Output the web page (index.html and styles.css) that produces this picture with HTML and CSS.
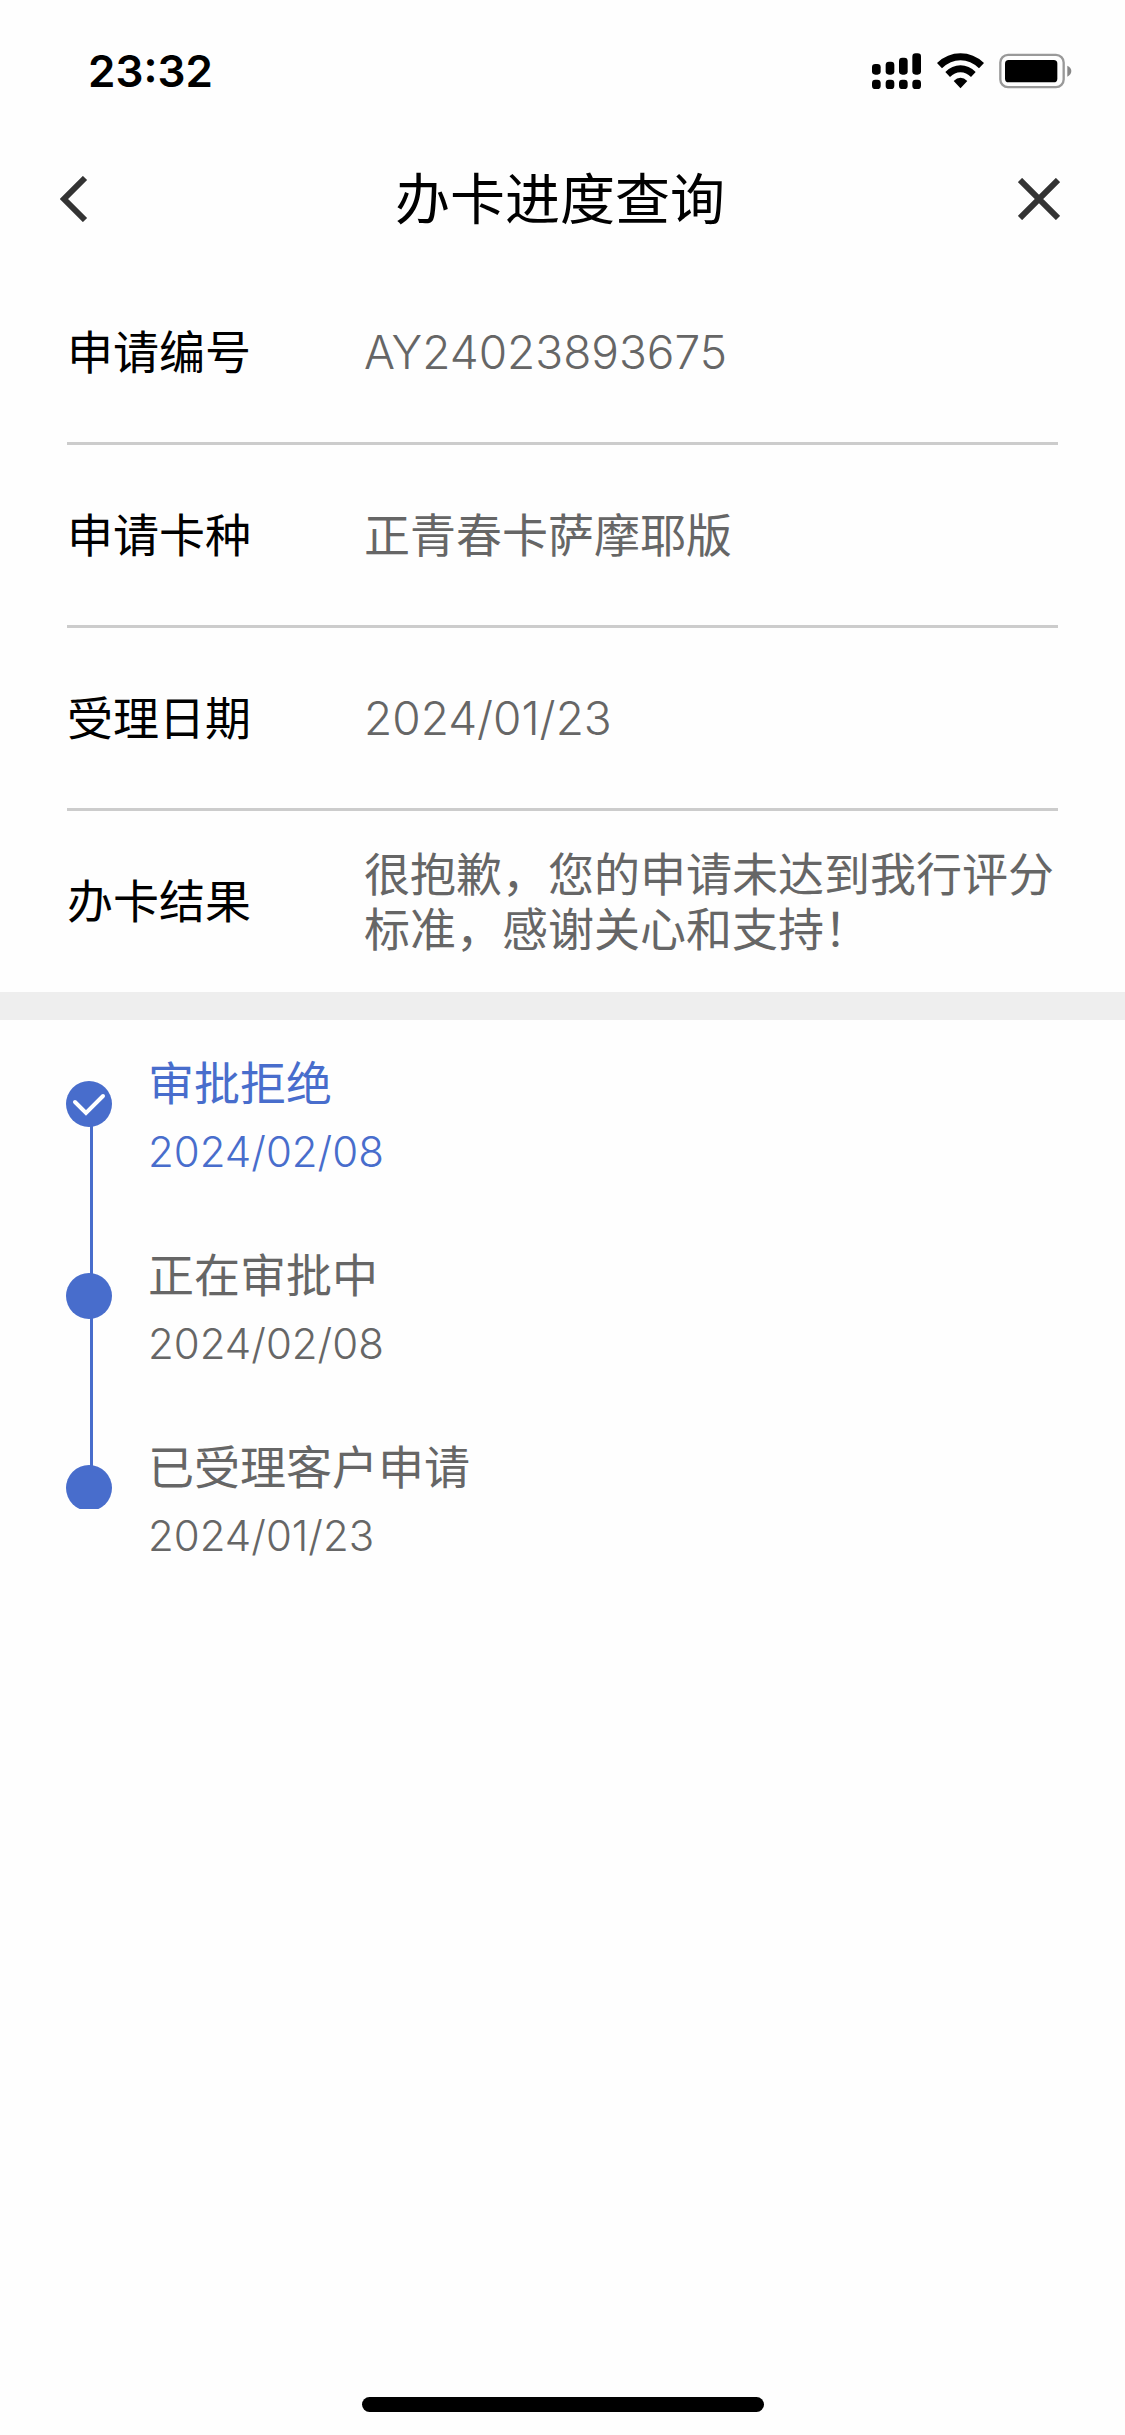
FILE: index.html
```html
<!DOCTYPE html>
<html lang="zh-CN">
<head>
<meta charset="utf-8">
<meta name="viewport" content="width=device-width, initial-scale=1">
<title>办卡进度查询</title>
<link rel="stylesheet" href="styles.css">
</head>
<body>
<div class="status-bar">
  <time class="clock">23:32</time>
  <div class="status-icons">
    <svg width="50" height="36" viewBox="66 70 150 108" aria-hidden="true">
      <rect x="66" y="103" width="26" height="32" rx="10"/>
      <rect x="107" y="96" width="26" height="39" rx="10"/>
      <rect x="147" y="84" width="26" height="51" rx="10"/>
      <rect x="187" y="71" width="26" height="64" rx="10"/>
      <rect x="66" y="150" width="26" height="28" rx="10"/>
      <rect x="107" y="150" width="26" height="28" rx="10"/>
      <rect x="147" y="150" width="26" height="28" rx="10"/>
      <rect x="187" y="150" width="26" height="28" rx="10"/>
    </svg>
    <svg width="47" height="36" viewBox="261 68 141 108" aria-hidden="true">
      <path d="M261 98Q292 69 331.500 69T402 98L387 114Q362 90 331.500 90T276 114Z"/>
      <path d="M286 125Q306 105 331.500 105T377 125L363 140Q349 126 331.500 126T300 140Z"/>
      <path d="M311 152Q331.500 133 352 152L331.500 174Z"/>
    </svg>
    <svg width="73" height="36" viewBox="449 69 219 108" aria-hidden="true">
      <rect x="453" y="74.500" width="190" height="97" rx="23" fill="none" stroke="#999" stroke-width="7"/>
      <rect x="467" y="90" width="157" height="67" rx="11"/>
      <path d="M654 107Q666 112 666 123T654 140Z" fill="#888"/>
    </svg>
  </div>
</div>

<header class="nav-bar">
  <button class="nav-button" type="button" aria-label="返回">
    <svg width="28" height="46" viewBox="0 0 28 46" aria-hidden="true"><path d="M25 2L4 23L25 44"/></svg>
  </button>
  <h1 class="nav-title">办卡进度查询</h1>
  <button class="nav-button nav-close" type="button" aria-label="关闭">
    <svg width="42" height="42" viewBox="0 0 42 42" aria-hidden="true"><path d="M2 2L40 40M40 2L2 40"/></svg>
  </button>
</header>

<main class="content">
  <dl class="details">
    <div class="detail"><dt>申请编号</dt><dd class="number">AY24023893675</dd></div>
    <div class="detail"><dt>申请卡种</dt><dd>正青春卡萨摩耶版</dd></div>
    <div class="detail"><dt>受理日期</dt><dd class="number">2024/01/23</dd></div>
    <div class="detail"><dt>办卡结果</dt><dd>很抱歉，您的申请未达到我行评分标准，感谢关心和支持！</dd></div>
  </dl>
  <ol class="timeline">
    <li class="step current">
      <div class="marker">
        <svg class="dot" width="46" height="46" viewBox="0 0 46 46" aria-hidden="true">
          <circle cx="23" cy="23" r="23"/><path d="M9 21L20 32L37 15"/>
        </svg>
      </div>
      <div class="step-text"><h2>审批拒绝</h2><time datetime="2024-02-08">2024/02/08</time></div>
    </li>
    <li class="step">
      <div class="marker">
        <svg class="dot" width="46" height="46" viewBox="0 0 46 46" aria-hidden="true"><circle cx="23" cy="23" r="23"/></svg>
      </div>
      <div class="step-text"><h2>正在审批中</h2><time datetime="2024-02-08">2024/02/08</time></div>
    </li>
    <li class="step">
      <div class="marker">
        <svg class="dot" width="46" height="44" viewBox="0 0 46 44" aria-hidden="true"><circle cx="23" cy="23" r="23"/></svg>
      </div>
      <div class="step-text"><h2>已受理客户申请</h2><time datetime="2024-01-23">2024/01/23</time></div>
    </li>
  </ol>
</main>
<div class="home-area"><div class="home-indicator"></div></div>
</body>
</html>
```
FILE: styles.css
```css
* {
  box-sizing: border-box;
}

body {
  display: flex;
  flex-direction: column;
  min-height: 100vh;
  margin: 0;
  background: #fefefe;
  color: #000;
  font-family: "Noto Sans CJK SC", sans-serif;
  font-size: 46px;
  line-height: 55px;
}

svg {
  display: block;
}

h1, h2, dl, dd, ol {
  margin: 0;
  padding: 0;
  font-weight: 400;
}

.status-bar {
  display: flex;
  align-items: center;
  justify-content: space-between;
  height: 142px;
  padding: 0 53px 0 88px;
}

.clock {
  font-family: Inter, sans-serif;
  font-size: 44px;
  font-weight: 600;
}

.status-icons {
  display: flex;
  gap: 15px;
}

.nav-bar {
  display: flex;
  align-items: center;
  justify-content: space-between;
  height: 114px;
  padding: 0 65px 0 60px;
}

.nav-button {
  display: flex;
  align-items: center;
  width: 66px;
  height: 66px;
  padding: 0;
  border: 0;
  background: none;
}

.nav-close {
  justify-content: flex-end;
}

.nav-button path {
  fill: none;
  stroke: #333;
  stroke-width: 6;
}

.nav-title {
  padding-bottom: 8px;
  font-size: 55px;
}

.content {
  flex: 1;
}

.details {
  padding: 6px 67px 0;
  border-bottom: 28px solid #eee;
}

.detail {
  display: grid;
  grid-template-columns: 297px 1fr;
  align-items: center;
  min-height: 183px;
  border-bottom: 3px solid #ccc;
}

.detail:last-child {
  min-height: 181px;
  border-bottom: 0;
}

.detail dt,
.detail dd {
  padding-bottom: 6px;
}

.detail dd {
  color: #666;
}

.detail .number {
  padding-bottom: 0;
  font-family: Inter, sans-serif;
  font-weight: 300;
}

.timeline {
  padding: 33px 66px 0;
  list-style: none;
}

.step {
  display: flex;
  gap: 36px;
  min-height: 192px;
  color: #666;
}

.current {
  color: #486dcc;
}

.marker {
  display: flex;
  flex-direction: column;
  width: 46px;
  padding-top: 28px;
}

.dot {
  flex: none;
  fill: #486dcc;
}

.dot path {
  fill: none;
  stroke: #fff;
  stroke-width: 4;
  stroke-linecap: round;
}

/* The connector runs from under one dot to the top of the next. */
.step:not(:last-child) .marker::after {
  content: "";
  flex: 1;
  width: 3px;
  margin: -1px 0 -29px 24px;
  background: #486dcc;
}

.step-text {
  display: flex;
  flex-direction: column;
  gap: 16px;
}

.step-text h2 {
  font-size: 46px;
}

.step-text time {
  font-family: Inter, sans-serif;
  font-size: 42px;
  font-weight: 300;
}

.home-area {
  display: flex;
  justify-content: center;
  padding: 24px 0 23px;
}

.home-indicator {
  width: 402px;
  height: 15px;
  border-radius: 8px;
  background: #000;
}
```
